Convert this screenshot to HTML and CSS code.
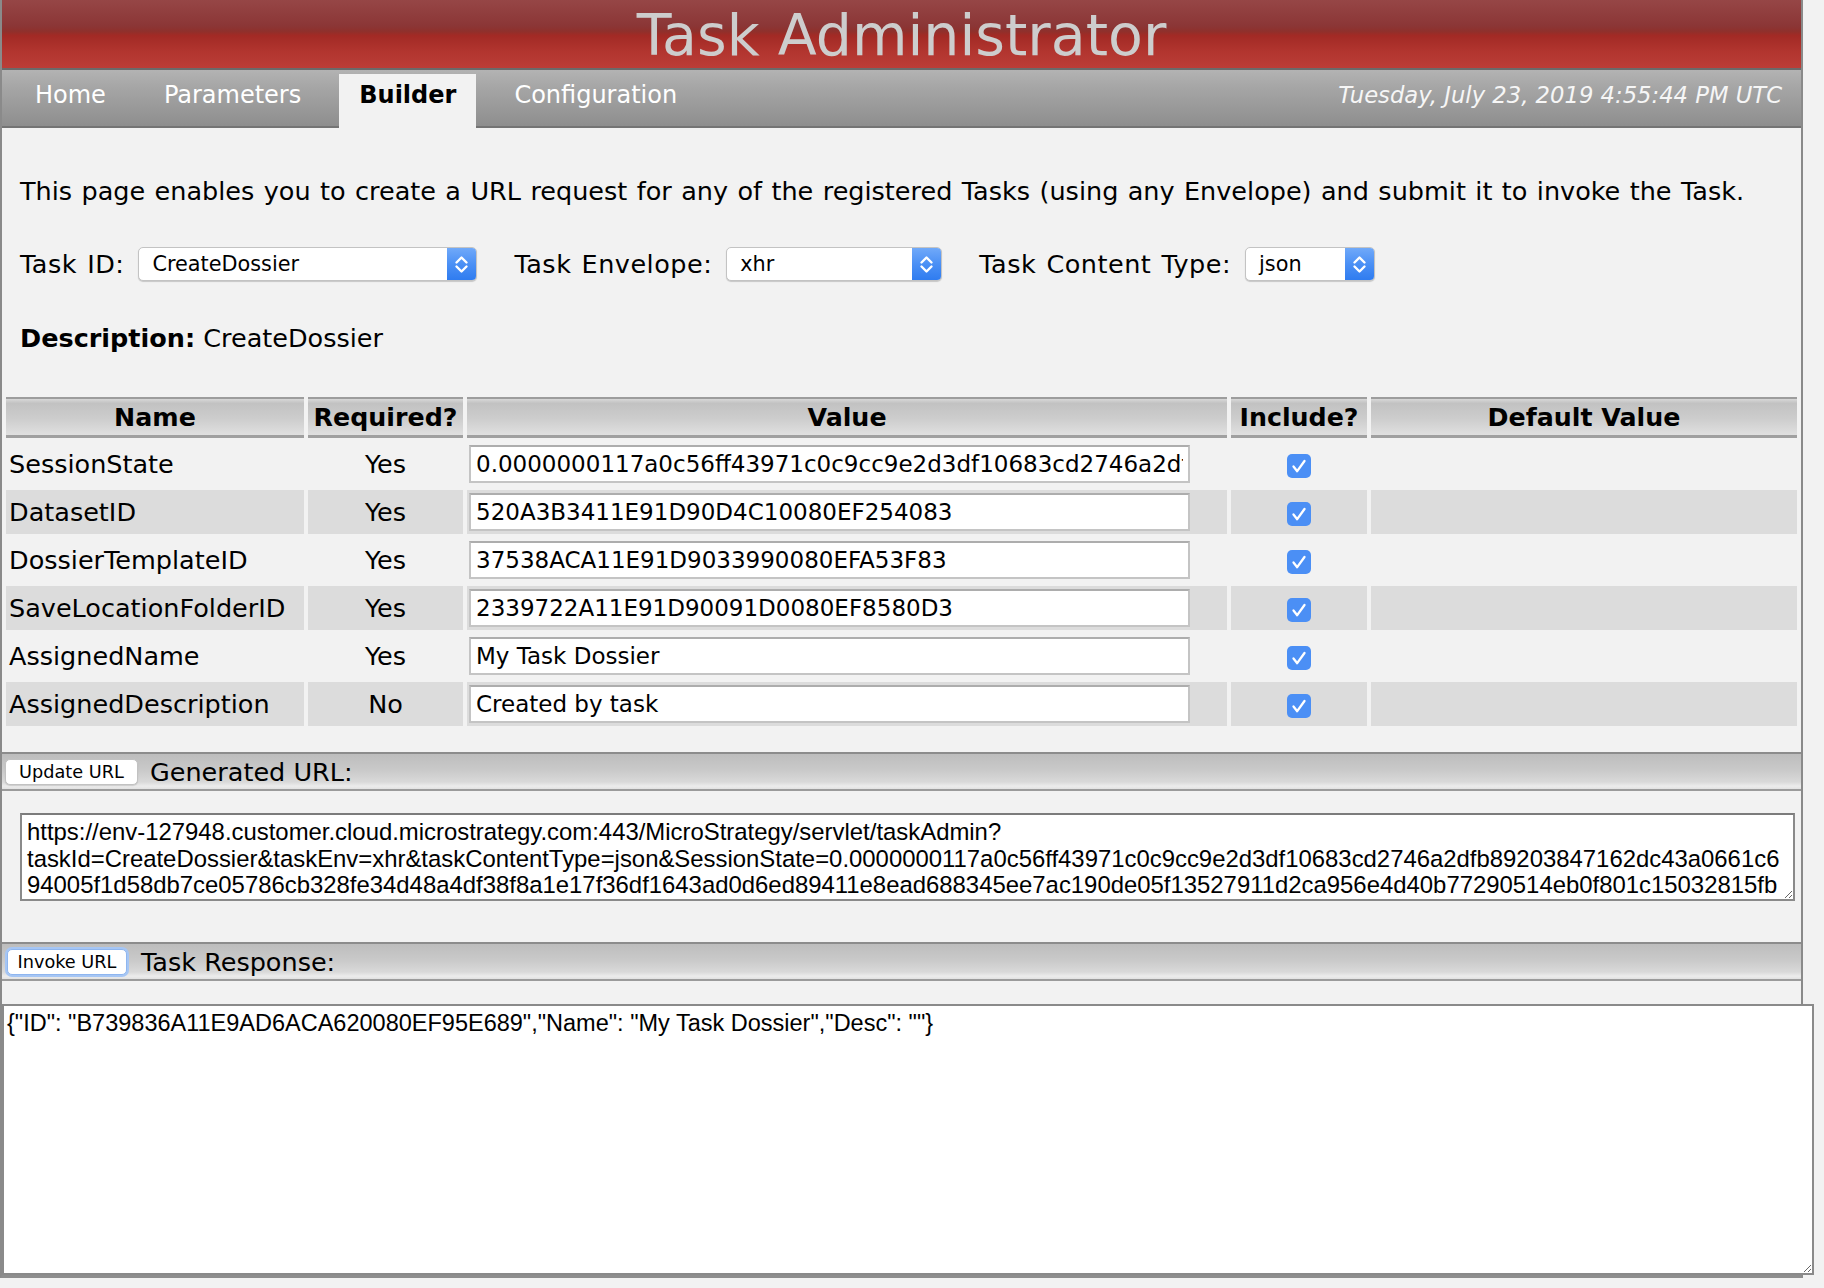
FILE: index.html
```html
<!DOCTYPE html>
<html lang="en">
<head>
<meta charset="utf-8">
<title>Task Administrator</title>
<link rel="stylesheet" href="styles.css">
</head>
<body>
<div class="page">
  <header class="banner"><h1>Task Administrator</h1></header>
  <nav class="tabs">
    <a class="tab">Home</a>
    <a class="tab">Parameters</a>
    <a class="tab active">Builder</a>
    <a class="tab">Configuration</a>
    <span class="date">Tuesday, July 23, 2019 4:55:44 PM UTC</span>
  </nav>
  <main class="content">
    <div class="top">
      <p class="intro">This page enables you to create a URL request for any of the registered Tasks (using any Envelope) and submit it to invoke the Task.</p>
      <div class="selectors">
        <span class="lbl">Task ID:</span>
        <div class="select s-task"><span class="sel-text">CreateDossier</span><span class="sel-arrow"><svg width="29" height="32" viewBox="0 0 29 32"><path d="M9.5 14.5 L14.5 9.5 L19.5 14.5 M9.5 18.5 L14.5 23.5 L19.5 18.5" fill="none" stroke="#fff" stroke-width="2.4" stroke-linecap="round" stroke-linejoin="round"/></svg></span></div>
        <span class="lbl">Task Envelope:</span>
        <div class="select s-env"><span class="sel-text">xhr</span><span class="sel-arrow"><svg width="29" height="32" viewBox="0 0 29 32"><path d="M9.5 14.5 L14.5 9.5 L19.5 14.5 M9.5 18.5 L14.5 23.5 L19.5 18.5" fill="none" stroke="#fff" stroke-width="2.4" stroke-linecap="round" stroke-linejoin="round"/></svg></span></div>
        <span class="lbl">Task Content Type:</span>
        <div class="select s-type"><span class="sel-text">json</span><span class="sel-arrow"><svg width="29" height="32" viewBox="0 0 29 32"><path d="M9.5 14.5 L14.5 9.5 L19.5 14.5 M9.5 18.5 L14.5 23.5 L19.5 18.5" fill="none" stroke="#fff" stroke-width="2.4" stroke-linecap="round" stroke-linejoin="round"/></svg></span></div>
      </div>
      <p class="desc"><b>Description:</b> CreateDossier</p>
    </div>

    <table class="params">
      <colgroup>
        <col class="c-name"><col class="c-req"><col class="c-val"><col class="c-inc"><col class="c-def">
      </colgroup>
      <thead>
        <tr><th>Name</th><th>Required?</th><th>Value</th><th>Include?</th><th>Default Value</th></tr>
      </thead>
      <tbody>
        <tr>
          <td class="name">SessionState</td><td class="req">Yes</td>
          <td class="val"><input type="text" value="0.0000000117a0c56ff43971c0c9cc9e2d3df10683cd2746a2dfb89203847162dc43a0661c6"></td>
          <td class="inc"><svg class="chk" width="24" height="24" viewBox="0 0 24 24"><rect x="0" y="0" width="24" height="24" rx="5" fill="#4b8ff5"/><path d="M6.5 12.5 L10.2 17.2 L17.5 7" fill="none" stroke="#fff" stroke-width="2.3" stroke-linecap="round" stroke-linejoin="round"/></svg></td>
          <td class="def"></td>
        </tr>
        <tr>
          <td class="name">DatasetID</td><td class="req">Yes</td>
          <td class="val"><input type="text" value="520A3B3411E91D90D4C10080EF254083"></td>
          <td class="inc"><svg class="chk" width="24" height="24" viewBox="0 0 24 24"><rect x="0" y="0" width="24" height="24" rx="5" fill="#4b8ff5"/><path d="M6.5 12.5 L10.2 17.2 L17.5 7" fill="none" stroke="#fff" stroke-width="2.3" stroke-linecap="round" stroke-linejoin="round"/></svg></td>
          <td class="def"></td>
        </tr>
        <tr>
          <td class="name">DossierTemplateID</td><td class="req">Yes</td>
          <td class="val"><input type="text" value="37538ACA11E91D9033990080EFA53F83"></td>
          <td class="inc"><svg class="chk" width="24" height="24" viewBox="0 0 24 24"><rect x="0" y="0" width="24" height="24" rx="5" fill="#4b8ff5"/><path d="M6.5 12.5 L10.2 17.2 L17.5 7" fill="none" stroke="#fff" stroke-width="2.3" stroke-linecap="round" stroke-linejoin="round"/></svg></td>
          <td class="def"></td>
        </tr>
        <tr>
          <td class="name">SaveLocationFolderID</td><td class="req">Yes</td>
          <td class="val"><input type="text" value="2339722A11E91D90091D0080EF8580D3"></td>
          <td class="inc"><svg class="chk" width="24" height="24" viewBox="0 0 24 24"><rect x="0" y="0" width="24" height="24" rx="5" fill="#4b8ff5"/><path d="M6.5 12.5 L10.2 17.2 L17.5 7" fill="none" stroke="#fff" stroke-width="2.3" stroke-linecap="round" stroke-linejoin="round"/></svg></td>
          <td class="def"></td>
        </tr>
        <tr>
          <td class="name">AssignedName</td><td class="req">Yes</td>
          <td class="val"><input type="text" value="My Task Dossier"></td>
          <td class="inc"><svg class="chk" width="24" height="24" viewBox="0 0 24 24"><rect x="0" y="0" width="24" height="24" rx="5" fill="#4b8ff5"/><path d="M6.5 12.5 L10.2 17.2 L17.5 7" fill="none" stroke="#fff" stroke-width="2.3" stroke-linecap="round" stroke-linejoin="round"/></svg></td>
          <td class="def"></td>
        </tr>
        <tr>
          <td class="name">AssignedDescription</td><td class="req">No</td>
          <td class="val"><input type="text" value="Created by task"></td>
          <td class="inc"><svg class="chk" width="24" height="24" viewBox="0 0 24 24"><rect x="0" y="0" width="24" height="24" rx="5" fill="#4b8ff5"/><path d="M6.5 12.5 L10.2 17.2 L17.5 7" fill="none" stroke="#fff" stroke-width="2.3" stroke-linecap="round" stroke-linejoin="round"/></svg></td>
          <td class="def"></td>
        </tr>
      </tbody>
    </table>

    <div class="bar bar-url">
      <button class="btn btn-update" type="button">Update URL</button>
      <span class="bar-title">Generated URL:</span>
    </div>
    <textarea class="url" readonly>https://env-127948.customer.cloud.microstrategy.com:443/MicroStrategy/servlet/taskAdmin?
taskId=CreateDossier&amp;taskEnv=xhr&amp;taskContentType=json&amp;SessionState=0.0000000117a0c56ff43971c0c9cc9e2d3df10683cd2746a2dfb89203847162dc43a0661c6
94005f1d58db7ce05786cb328fe34d48a4df38f8a1e17f36df1643ad0d6ed89411e8ead688345ee7ac190de05f13527911d2ca956e4d40b77290514eb0f801c15032815fb</textarea>

    <div class="bar bar-resp">
      <button class="btn btn-invoke" type="button">Invoke URL</button>
      <span class="bar-title">Task Response:</span>
    </div>
    <textarea class="resp" readonly>{"ID": "B739836A11E9AD6ACA620080EF95E689","Name": "My Task Dossier","Desc": ""}</textarea>
  </main>
</div>
</body>
</html>
```
FILE: styles.css
```css
* { box-sizing: border-box; }
html, body { margin: 0; padding: 0; }
body {
  background: #f2f2f2;
  font-family: "DejaVu Sans", Verdana, sans-serif;
  font-size: 25.5px;
  color: #000;
  width: 1824px;
  height: 1288px;
  overflow: hidden;
}
.page {
  width: 1803px;
  border-left: 2px solid #8a8a8a;
  border-right: 2px solid #8a8a8a;
  border-bottom: 3px solid #8e8e8e;
  background: #f2f2f2;
}

/* ---------- banner ---------- */
.banner {
  height: 70px;
  border-bottom: 2px solid #6a6a6a;
  background: linear-gradient(to bottom, #964646 0%, #8b3636 38%, #8f302c 46%, #a22a25 52%, #b2352f 76%, #bb3d37 100%);
  text-align: center;
}
.banner h1 {
  margin: 0;
  padding-top: 3px;
  font-weight: normal;
  font-size: 57px;
  line-height: 65px;
  color: #cdcdcd;
}

/* ---------- tabs ---------- */
.tabs {
  height: 58px;
  display: flex;
  align-items: flex-end;
  gap: 18px;
  padding: 0 19px 0 13px;
  background: linear-gradient(to bottom, #b3b3b3 0%, #a6a6a6 30%, #8e8e8e 100%);
  border-bottom: 2px solid #747474;
}
.tab {
  height: 54px;
  margin-bottom: -2px;
  padding: 7px 20px 0;
  line-height: 28px;
  font-size: 24px;
  color: #fff;
}
.tab.active {
  background: #f2f2f2;
  color: #000;
  font-weight: bold;
}
.date {
  margin-left: auto;
  height: 54px;
  margin-bottom: -2px;
  padding-top: 7px;
  line-height: 28px;
  font-size: 22.7px;
  font-style: italic;
  color: #f6f6f6;
}

/* ---------- top area ---------- */
.top { padding: 48px 0 0 18px; }
.intro { margin: 0; line-height: 30px; word-spacing: 1.3px; }
.selectors {
  display: flex;
  align-items: center;
  height: 34px;
  margin-top: 41px;
}
.lbl {
  line-height: 30px;
  margin-right: 14px;
  letter-spacing: 0.5px;
  word-spacing: 1.5px;
}
.select {
  display: flex;
  height: 34px;
  margin-right: 37px;
  background: #fff;
  border: 1px solid #c3c3c3;
  border-radius: 5px;
  box-shadow: 0 1px 1px rgba(0,0,0,0.18);
  overflow: hidden;
}
.s-task { width: 339px; }
.s-env { width: 216px; }
.s-type { width: 130px; }
.sel-text {
  flex: 1;
  padding-left: 13px;
  font-size: 20.8px;
  line-height: 32px;
}
.sel-arrow {
  width: 29px;
  height: 32px;
  background: linear-gradient(to bottom, #70a9f9 0%, #4b90f5 50%, #2f7cf0 100%);
}
.sel-arrow svg { display: block; }
.desc { margin: 42px 0 0; line-height: 30px; }

/* ---------- table ---------- */
.params {
  width: 100%;
  table-layout: fixed;
  border-spacing: 4px;
  margin-top: 40px;
}
.c-name { width: 298px; }
.c-req { width: 155px; }
.c-val { width: 760px; }
.c-inc { width: 136px; }
.params th {
  height: 41px;
  padding: 0;
  font-size: 25.3px;
  font-weight: bold;
  text-align: center;
  vertical-align: middle;
  border-top: 2px solid #9d9d9d;
  border-bottom: 3px solid #a0a0a0;
  background: linear-gradient(to bottom, #d8d8d8 0%, #c2c2c2 12%, #cdcdcd 55%, #e0e0e0 100%);
}
.params td {
  height: 44px;
  padding: 0;
  vertical-align: middle;
}
.params tbody tr:nth-child(even) td { background: #dcdcdc; }
.params td.name { padding-left: 3px; white-space: nowrap; }
.params td.req { text-align: center; }
.params td.inc { text-align: center; }
.chk { display: inline-block; vertical-align: middle; }
.val input {
  display: block;
  width: 721px;
  height: 38px;
  margin-left: 2px;
  padding: 0 5px;
  border: 2px solid #c4c4c4;
  border-top-color: #adadad;
  background: #fff;
  font-family: "DejaVu Sans", Verdana, sans-serif;
  font-size: 23px;
  color: #000;
  outline: none;
}

/* ---------- bars ---------- */
.bar {
  height: 39px;
  display: flex;
  align-items: center;
  padding-left: 3px;
  border-top: 2px solid #8c8c8c;
  border-bottom: 2px solid #9b9b9b;
  background: linear-gradient(to bottom, #bdbdbd 0%, #c9c9c9 45%, #d9d9d9 80%, #ececec 92%, #e2e2e2 100%);
}
.bar-url { margin-top: 22px; }
.bar-resp { margin-top: 41px; }
.bar-title { margin-left: 12px; line-height: 30px; }
.btn {
  height: 26px;
  padding: 0;
  background: #fff;
  border: 1px solid #c2c2c2;
  border-radius: 5px;
  box-shadow: 0 1px 1px rgba(0,0,0,0.12);
  font-family: "DejaVu Sans", Verdana, sans-serif;
  font-size: 17.7px;
  color: #000;
  text-align: center;
}
.btn-update { width: 133px; }
.btn-invoke {
  width: 120px;
  margin-left: 2px;
  border-color: #8fb6ef;
  box-shadow: 0 0 0 2px #a6c6f4;
}
.bar-resp .bar-title { margin-left: 14px; }

/* ---------- textareas ---------- */
.url {
  display: block;
  width: 1775px;
  height: 88px;
  margin: 22px 0 0 18px;
  padding: 4px 5px;
  border: 2px solid #8a8a8a;
  border-top-color: #7c7c7c;
  background: #fff;
  font-family: "Liberation Sans", Arial, sans-serif;
  font-size: 23.9px;
  line-height: 26.7px;
  color: #000;
  white-space: pre;
  overflow: hidden;
  resize: both;
  outline: none;
}
.resp {
  display: block;
  width: 1812px;
  height: 271px;
  margin: 23px 0 0 0;
  padding: 4px 3px;
  border: 2px solid #8a8a8a;
  background: #fff;
  font-family: "Liberation Sans", Arial, sans-serif;
  font-size: 23.5px;
  line-height: 27px;
  color: #000;
  overflow: hidden;
  resize: both;
  outline: none;
}
```
